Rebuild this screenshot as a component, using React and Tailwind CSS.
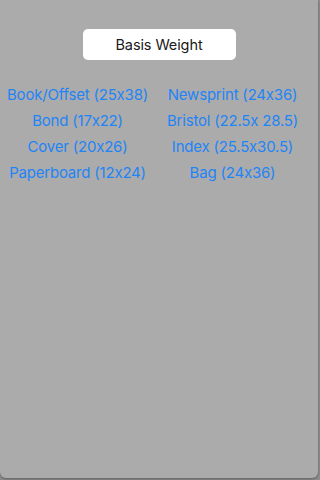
const sizes = [
  ["Book/Offset (25x38)", "Newsprint (24x36)"],
  ["Bond (17x22)", "Bristol (22.5x 28.5)"],
  ["Cover (20x26)", "Index (25.5x30.5)"],
  ["Paperboard (12x24)", "Bag (24x36)"],
];

export default function App() {
  return (
    <div className="w-[320px] h-[480px] bg-[#8e8e8e] overflow-hidden font-['Inter',sans-serif]">
      <div className="w-[318px] h-[478px] bg-[#ababab] rounded-b-[6px] shadow-[0_1px_3px_rgba(0,0,0,0.35)] pt-[29px]">
        <div className="flex justify-center">
          <button className="w-[153px] h-[31px] bg-white rounded-[5px] text-[14.5px] text-[#1a1a1a] tracking-[-0.1px]">
            Basis Weight
          </button>
        </div>

        <div className="mt-[25px] grid grid-cols-[155px_155px] gap-y-[6px] text-[15px] leading-[20px] text-[#1f84f6] tracking-[-0.2px]">
          {sizes.map(([left, right]) => (
            <div key={left} className="contents">
              <span className="text-center">{left}</span>
              <span className="text-center">{right}</span>
            </div>
          ))}
        </div>
      </div>
    </div>
  );
}
